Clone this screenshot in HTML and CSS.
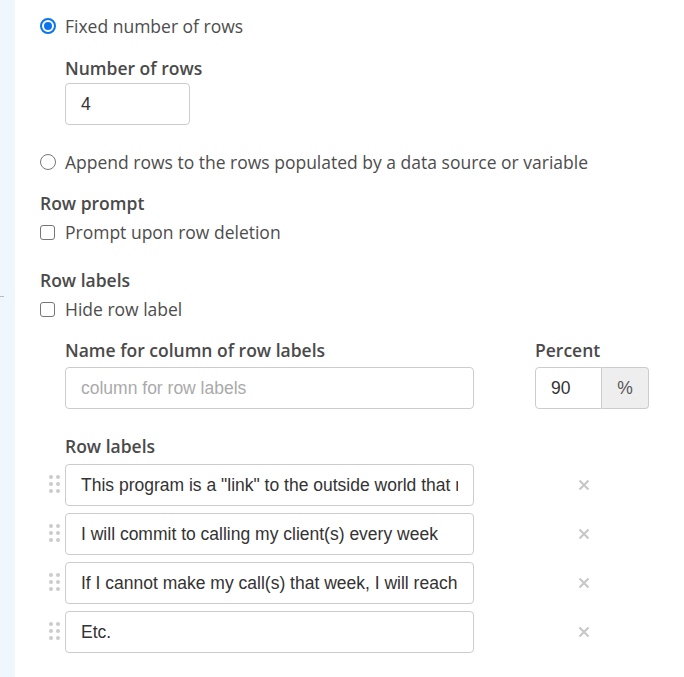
FILE: index.html
```html
<!DOCTYPE html>
<html>
<head>
<meta charset="utf-8">
<link rel="stylesheet" href="styles.css">
</head>
<body>
<div class="page">
  <div class="strip"><span class="tick"></span></div>
  <div class="content">
    <label class="opt"><span class="radio on"></span><span>Fixed number of rows</span></label>
    <div class="indent block-rows">
      <div class="lbl">Number of rows</div>
      <div class="input small">4</div>
    </div>
    <label class="opt append"><span class="radio"></span><span>Append rows to the rows populated by a data source or variable</span></label>

    <div class="lbl sect">Row prompt</div>
    <label class="opt"><span class="check"></span><span>Prompt upon row deletion</span></label>

    <div class="lbl sect sect2">Row labels</div>
    <label class="opt"><span class="check"></span><span>Hide row label</span></label>

    <div class="indent names">
      <div class="col-name">
        <div class="lbl">Name for column of row labels</div>
        <div class="input wide placeholder">column for row labels</div>
      </div>
      <div class="col-pct">
        <div class="lbl">Percent</div>
        <div class="group">
          <div class="input pct">90</div>
          <div class="addon">%</div>
        </div>
      </div>
    </div>

    <div class="indent labels">
      <div class="lbl">Row labels</div>
      <div class="row"><span class="handle"><i></i><i></i><i></i><i></i><i></i><i></i></span><div class="input wide"><span class="clip">This program is a "link" to the outside world that may</span></div><svg class="x" width="12" height="12" viewBox="0 0 12 12"><path d="M1.5 1.5 L10.5 10.5 M10.5 1.5 L1.5 10.5" stroke="#c8c8c8" stroke-width="2.2" stroke-linecap="butt"/></svg></div>
      <div class="row"><span class="handle"><i></i><i></i><i></i><i></i><i></i><i></i></span><div class="input wide"><span class="clip">I will commit to calling my client(s) every week</span></div><svg class="x" width="12" height="12" viewBox="0 0 12 12"><path d="M1.5 1.5 L10.5 10.5 M10.5 1.5 L1.5 10.5" stroke="#c8c8c8" stroke-width="2.2" stroke-linecap="butt"/></svg></div>
      <div class="row"><span class="handle"><i></i><i></i><i></i><i></i><i></i><i></i></span><div class="input wide"><span class="clip">If I cannot make my call(s) that week, I will reach out</span></div><svg class="x" width="12" height="12" viewBox="0 0 12 12"><path d="M1.5 1.5 L10.5 10.5 M10.5 1.5 L1.5 10.5" stroke="#c8c8c8" stroke-width="2.2" stroke-linecap="butt"/></svg></div>
      <div class="row"><span class="handle"><i></i><i></i><i></i><i></i><i></i><i></i></span><div class="input wide"><span class="clip">Etc.</span></div><svg class="x" width="12" height="12" viewBox="0 0 12 12"><path d="M1.5 1.5 L10.5 10.5 M10.5 1.5 L1.5 10.5" stroke="#c8c8c8" stroke-width="2.2" stroke-linecap="butt"/></svg></div>
    </div>
  </div>
</div>
</body>
</html>
```
FILE: styles.css
```css
* { box-sizing: border-box; }
html, body { margin: 0; padding: 0; background: #fff; }
body { font-family: "Open Sans", sans-serif; color: #4d4d4d; font-size: 17.5px; }
.page { display: flex; min-height: 677px; }
.strip { width: 15px; background: #f0f6fd; position: relative; flex: none; }
.tick { position: absolute; left: 0; top: 296px; width: 4px; height: 1px; background: #bbb; }
.content { padding: 14px 0 0 25px; flex: 1; }
.opt { display: flex; align-items: center; height: 24px; line-height: 24px; }
.radio { width: 16px; height: 16px; border: 1px solid #777; border-radius: 50%; margin-right: 9px; flex: none; position: relative; }
.radio.on { border: 2px solid #0a74f0; }
.radio.on::after { content: ""; position: absolute; left: 2px; top: 2px; width: 8px; height: 8px; border-radius: 50%; background: #0a74f0; }
.check { width: 15px; height: 15px; border: 1px solid #767676; border-radius: 3px; margin-right: 10px; flex: none; }
.indent { padding-left: 25px; }
.lbl { font-weight: 600; line-height: 24px; color: #4a4a4a; }
.block-rows { margin-top: 18px; }
.block-rows .lbl { margin-bottom: 3px; }
.input { height: 42px; border: 1px solid #ccc; border-radius: 4px; font-family: "Liberation Sans", Arial, sans-serif; font-size: 17.5px; color: #333; padding: 0 15px; display: flex; align-items: center; background: #fff; }
.input.small { width: 125px; }
.append { margin-top: 25px; }
.sect { margin-top: 17px; margin-bottom: 5px; }
.sect2 { margin-top: 24px; }
.names { display: flex; margin-top: 17px; }
.names .lbl { margin-bottom: 5px; }
.col-pct { margin-left: 61px; }
.input.wide { width: 409px; }
.placeholder { color: #aaa; }
.group { display: flex; }
.input.pct { width: 67px; border-radius: 4px 0 0 4px; }
.addon { width: 47px; height: 42px; border: 1px solid #ccc; border-left: none; border-radius: 0 4px 4px 0; background: #eee; font-family: "Liberation Sans", Arial, sans-serif; font-size: 17.5px; color: #555; display: flex; align-items: center; justify-content: center; }
.labels { margin-top: 25px; position: relative; }
.labels .lbl { margin-bottom: 6px; }
.row { display: flex; align-items: center; margin-bottom: 7px; position: relative; }
.clip { display: block; width: 100%; overflow: hidden; white-space: nowrap; line-height: 40px; }
.handle { position: absolute; left: -16px; top: 11px; width: 10px; display: grid; grid-template-columns: 4px 4px; gap: 3px 3px; }
.handle i { width: 4px; height: 4px; border-radius: 50%; background: #ccc; display: block; }
.x { margin-left: 104px; flex: none; }
```
